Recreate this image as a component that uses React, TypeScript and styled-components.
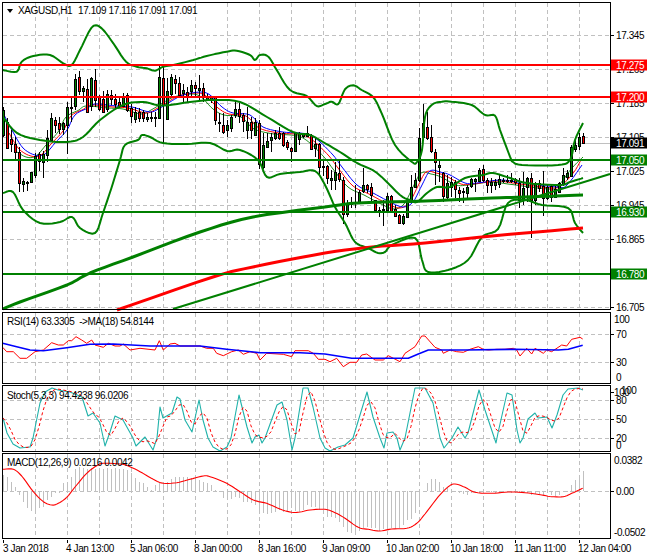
import React from "react";
import styled, { createGlobalStyle } from "styled-components";

const Global = createGlobalStyle`
  html, body { margin: 0; padding: 0; background: #ffffff; }
`;

const Page = styled.main`
  width: 650px;
  height: 560px;
  display: flex;
  flex-direction: column;
  background: #ffffff;
  overflow: hidden;
  font-family: "Liberation Sans", Arial, sans-serif;
`;

const Pane = styled.section<{ $h: number }>`
  flex: none;
  height: ${(p) => p.$h}px;
  width: 650px;
  svg { display: block; }
`;

const Label = styled.text`
  font-family: "Liberation Sans", Arial, sans-serif;
  font-size: 10px;
  letter-spacing: -0.4px;
  white-space: pre;
  fill: #000000;
`;

const BoxLabel = styled(Label)`
  fill: #ffffff;
`;

type P = [number, number];

const zp = (f: number[], xo: number, yo: number): P[] => {
  const out: P[] = [];
  for (let i = 0; i < f.length; i += 2) out.push([xo + f[i] / 3, yo + f[i + 1] / 3]);
  return out;
};
const pl = (pts: P[]) => pts.map(([x, y]) => `${x.toFixed(1)},${y.toFixed(1)}`).join(" ");

const smooth = (pts: P[], steps = 5): P[] => {
  const out: P[] = [pts[0]];
  for (let i = 0; i < pts.length - 1; i++) {
    const p0 = pts[Math.max(0, i - 1)];
    const p1 = pts[i];
    const p2 = pts[i + 1];
    const p3 = pts[Math.min(pts.length - 1, i + 2)];
    for (let s = 1; s <= steps; s++) {
      const t = s / steps;
      const f = (a: number, b: number, c: number, d: number) =>
        0.5 * (2 * b + (c - a) * t + (2 * a - 5 * b + 4 * c - d) * t * t + (3 * b - a - 3 * c + d) * t * t * t);
      out.push([f(p0[0], p1[0], p2[0], p3[0]), f(p0[1], p1[1], p2[1], p3[1])]);
    }
  }
  return out;
};

const UPPER: P[] = smooth([
  ...zp([8,210,50,215,65,185,100,168,150,165,190,190,215,195,240,150,270,90,288,76,310,90,340,130,378,185,410,200,440,205,465,212,490,200,520,195,580,180,620,168,680,155,710,152,750,165,765,180,780,165,805,170,830,210,870,270,920,288,950,318,975,312], 0, 0),
  ...zp([20,305,40,312,60,268,85,256,110,270,145,292,170,340], 325, 0),
  [395,145],[412,162],[417,162],[422,150],[425,117],
  ...zp([320,315,350,305,380,305,440,315,480,345,510,347,525,390,555,470], 325, 0),
  [513,162],[522,165],[558,165],[570,160],[575,140],[583,123],
]);
const MIDDLE: P[] = smooth([
  [3,117],[17,133],[40,140],[67,142],[83,137],[100,120],[123,105],[143,102],[157,105],[170,105],[190,102],[213,100],[240,102],[267,117],[293,132],[310,135],[323,142],[340,152],[357,163],[377,173],[400,195],[410,200],[417,202],[427,193],[437,187],[450,187],[465,178],[483,175],[493,173],[510,178],[527,183],[560,185],[570,182],[583,178],
]);
const LOWER: P[] = smooth([
  [3,193],[13,192],[23,210],[40,223],[60,222],[72,217],[80,228],[95,233],[103,213],[113,183],[120,160],[125,145],[138,140],[142,135],[150,137],[163,143],[187,144],[210,143],[227,151],[240,150],[258,160],[267,177],[280,174],[300,172],[315,171],[325,185],[335,207],[345,223],[355,242],[368,248],[378,253],[385,252],[392,245],[415,238],[422,260],[428,272],[448,270],[468,260],[482,237],[498,229],[508,203],[525,200],[542,205],[568,208],[575,223],[583,233],
]);
const MA200: P[] = smooth([[3,309],[20,302],[67,285],[90,273],[133,257],[200,232],[253,217],[325,207],[358,203],[425,201],[492,198],[525,197],[583,195]]);
const MARED: P[] = smooth([[117,310],[213,277],[253,267],[325,253],[372,247],[425,243],[492,236],[583,228]]);
const BLUE_RAW: P[] = [
  [3,113],[13,132],[23,148],[35,155],[45,154],[55,143],[67,130],[75,115],[88,108],[95,104],[117,106],[132,107],[150,112],[160,108],[170,102],[183,95],[200,92],[210,95],[222,107],[233,113],[250,115],[263,127],[283,132],[300,133],[310,135],[320,142],[333,155],[342,167],[357,185],[373,193],[390,202],[403,207],[413,202],[422,185],[430,171],[440,172],[450,175],[465,183],[477,183],[500,180],[517,182],[557,187],[567,185],[582,165],
];
const BLUE = smooth(BLUE_RAW);
const RED_MA: P[] = smooth([...BLUE_RAW.slice(1, -2).map(([x, y]): P => [x - 4, y + 1]), [563, 184], [574, 172], [581, 160]]);
const GREEN_MA: P[] = smooth([...BLUE_RAW.slice(2, -2).map(([x, y]): P => [x - 9, y + 2]), [558, 186], [572, 168], [583, 157]]);

type C = [number, number, number, number, 0 | 1];
const G = 0 as const;
const R = 1 as const;
const C1: C[] = [
  [125,135,210,215,G],[160,172,250,252,R],[195,222,236,262,R],[215,236,260,282,R],[245,262,355,382,R],[340,348,356,380,G],[348,350,352,378,G],[320,322,352,354,G],[265,272,330,340,G],[262,268,290,318,R],
  [258,268,292,338,G],[195,220,272,290,G],[145,160,225,228,G],[155,165,180,205,R],[155,175,192,208,R],[170,175,192,210,G],[110,125,178,268,G],[95,126,130,170,G],[28,42,122,135,G],[17,36,78,90,R],
  [62,68,78,110,G],[42,72,140,140,R],[35,40,125,138,G],[12,44,104,125,R],[90,95,130,138,R],[78,102,140,145,R],[75,88,132,140,G],[75,90,102,120,R],[88,102,118,130,R],[100,112,124,130,R],
  [85,92,122,125,G],[85,90,136,140,R],[118,130,155,175,R],[125,140,160,175,G],[130,140,158,170,R],[135,140,158,170,R],[145,155,160,170,G],
  [140,155,158,172,G],[140,155,158,185,G],[2,36,158,160,G],[0,38,120,235,R],[40,78,163,165,G],[28,36,88,92,G],[30,42,55,88,R],[35,55,92,98,R],[58,76,84,110,G],
  [65,82,95,112,R],[45,60,78,95,G],[50,60,70,92,R],[30,68,75,105,G],[55,70,95,110,R],[88,95,102,108,G],[92,95,102,115,G],[92,95,165,180,R],[145,172,176,200,G],[145,180,200,208,R],
  [165,180,194,215,G],[150,155,188,200,G],[105,132,150,160,G],[115,132,152,175,R],[145,150,168,200,R],[125,170,195,222,G],[155,172,196,222,R],[158,172,210,212,G],[165,175,298,312,R],[205,240,305,312,G],
  [205,228,246,250,G],[205,215,225,262,G],[195,205,220,225,G],[185,205,220,225,R],[200,205,240,245,R],[225,232,248,255,R],[245,250,260,292,R],[200,205,258,262,G],[200,205,222,240,G],
];
const C2: C[] = [
  [68,70,78,85,G],[48,70,78,82,G],[72,75,118,118,R],[85,103,115,142,G],[100,103,172,195,R],[150,168,172,198,G],[165,168,205,222,R],[180,205,210,240,G],[155,185,210,240,G],[150,188,205,215,R],
  [200,210,312,342,R],[270,280,312,322,G],[260,278,282,295,G],[225,275,278,295,G],[240,245,278,282,G],[175,224,242,250,G],[222,224,235,250,R],[220,232,255,280,R],[270,270,300,305,R],[290,300,304,320,G],
  [270,296,300,348,G],[250,258,300,305,G],[255,258,302,305,R],[285,296,316,320,R],[312,316,340,342,R],[312,318,340,344,G],[270,275,320,325,G],[195,232,272,280,G],[190,210,230,235,G],[55,85,212,215,G],
  [-18,39,80,85,G],[6,51,84,90,R],[45,80,122,128,R],[118,125,155,225,R],[150,165,170,215,G],[185,190,258,275,R],[195,220,262,268,G],
  [200,215,230,262,G],[210,215,235,265,R],[230,240,250,275,R],[235,242,245,278,G],[225,230,248,265,G],[205,208,230,235,G],[205,208,214,245,G],[175,180,212,215,G],[165,178,212,215,R],[205,210,225,250,R],
  [205,215,224,250,G],[208,215,225,240,G],[195,208,222,235,G],[205,210,214,220,R],[195,210,214,220,G],[190,210,214,220,G],[205,208,218,225,R],[205,218,270,295,R],[185,235,272,285,G],[200,205,232,275,G],
  [190,205,270,385,R],[215,220,272,285,G],[210,220,235,245,R],[183,228,265,318,R],[225,232,265,270,G],[225,228,260,275,R],[225,238,262,265,G],[215,218,245,250,G],[175,195,222,228,G],[180,190,202,210,G],
  [105,110,198,200,G],[85,105,118,125,G],[70,82,108,120,G],[70,78,100,100,R],
];
const CANDLES = [
  ...C1.map((c) => c.map((v, i) => (i < 4 ? 65 + v / 3 : v))),
  ...C2.map((c) => c.map((v, i) => (i < 4 ? 110 + v / 3 : v))),
];

const RSI_RED: P[] = [
  ...zp([8,112,20,125,40,125,60,145,80,145,105,125,130,120,155,98,175,105,190,105,205,92,215,92,228,80,245,90,260,100,275,90,285,105,310,112,325,100,345,108,360,108,370,102,390,120,420,115,465,120,478,92,490,120,510,102,525,100,540,108,600,108,620,115,640,115,650,130,670,137,695,125,715,120,730,133,750,125,770,130,780,150,800,130,850,133,875,140,885,122,925,122,940,130,955,148,975,148], 0, 310),
  ...zp([15,155,35,145,55,170,75,157,95,157,110,135,125,132,150,150,175,150,190,137,225,155,240,130,270,110,290,78,300,78,330,112,350,120,355,130,375,120,395,125,415,127,435,118,460,110,475,118,490,120,515,118,530,118,540,118,565,115,575,120,585,138,605,115,620,132,630,115,655,130,665,120,680,125,710,105,725,108,740,88,765,82,773,87], 325, 310),
];
const RSI_BLUE: P[] = [
  ...zp([8,100,50,110,90,120,130,122,200,113,270,103,340,102,450,108,600,108,680,118,780,128,900,128,975,132], 0, 310),
  ...zp([80,145,250,145,280,132,310,120,420,120,570,118,700,120,730,118,773,106], 325, 310),
];

const TEAL: P[] = [
  [3,418],[7,433],[13,444],[20,448],[30,447],[33,438],[40,403],[45,392],[52,388],[58,390],[70,392],[82,397],[88,416],[93,413],[100,423],[105,446],[110,432],[115,416],[123,420],[133,438],[136,446],[145,437],[153,450],[157,438],[160,407],[163,418],[172,413],[177,397],[180,399],[185,420],[192,432],[199,400],[203,420],[208,438],[213,447],[220,451],[227,447],[231,438],[239,395],[247,427],[252,443],[255,437],[259,435],[262,443],[265,438],[277,405],[282,402],[287,420],[292,450],[295,438],[303,388],[308,388],[313,407],[320,438],[325,448],[330,451],[338,447],[345,445],[353,438],[367,392],[373,417],[380,438],[384,448],[387,433],[393,432],[397,438],[400,450],[405,438],[415,388],[425,388],[433,403],[440,438],[444,448],[452,438],[458,427],[465,438],[468,433],[479,390],[485,410],[495,440],[496,443],[498,433],[507,393],[512,395],[517,430],[520,443],[523,438],[528,419],[535,413],[538,418],[547,417],[552,428],[557,415],[563,395],[568,389],[578,388],[583,390],
];
const interp = (pts: P[], x: number) => {
  for (let i = 1; i < pts.length; i++) {
    if (x <= pts[i][0]) {
      const [a, b] = [pts[i - 1], pts[i]];
      return a[1] + ((b[1] - a[1]) * (x - a[0])) / (b[0] - a[0] || 1);
    }
  }
  return pts[pts.length - 1][1];
};
const SIGNAL: P[] = Array.from({ length: 146 }, (_, k): P => {
  const x = 3 + 4 * k;
  const v = [x, x - 4, x - 8].map((q) => interp(TEAL, Math.max(3, q)));
  return [x, Math.max(388, (v[0] + v[1] + v[2]) / 3)];
});

const HIST_A = [105,110,125,140,165,185,205,212,210,205,200,180,170,160,158,130,125,110,88,82,85,88,85,88,85,88,85,88,85,88,88,90,100,115,125,130,140,150,135,130,130,125,118,112,112,110,112,115,115,120,125,130,135,150,155,175,175,178,170,175,185,185,190,195,215,220,222,218,215,210,215,212,205,212,215,210,195,200,200,210,208];
const HIST_B = [230,232,235,245,262,275,280,282,272,265,262,265,265,272,268,268,265,268,265,255,240,238,220,190,155,128,118,118,125,142,145,150,155,158,162,165,160,160,158,158,156,156,158,158,156,156,158,158,155,158,160,165,162,165,165,160,165,168,165,155,155,135,120,105,92];
const HIST = [...HIST_A, ...HIST_B].map((z) => 440 + z / 3);

const MACD_LINE: P[] = smooth([
  ...zp([8,88,40,88,65,108,100,155,130,185,155,195,175,190,200,172,230,135,260,100,290,77,310,70,360,72,385,78,420,95,460,118,490,130,530,128,570,118,610,108,630,110,680,130,720,155,760,180,800,190,840,207,875,217,900,216,930,210,975,208], 0, 440),
  ...zp([30,218,60,235,100,262,130,268,165,273,200,267,245,265,275,250,300,222,340,170,370,140,390,132,420,142,450,157,500,160,550,156,600,158,650,165,680,170,715,170,740,160,773,145], 325, 440),
]);

const VGRID = Array.from({ length: 18 }, (_, i) => 35.5 + 32 * i);

const Grid = ({ ys, top, bottom }: { ys: number[]; top: number; bottom: number }) => (
  <g stroke="#c0c0c0" strokeWidth={1} strokeDasharray="4 3" shapeRendering="crispEdges">
    {VGRID.map((x) => <line key={x} x1={x} x2={x} y1={top} y2={bottom} />)}
    {ys.map((y) => <line key={y} x1={3} x2={610} y1={y} y2={y} />)}
  </g>
);

const Frame = ({ top, bottom }: { top: number; bottom: number }) => (
  <rect x={2.5} y={top + 0.5} width={608} height={bottom - top} fill="none" stroke="#000" strokeWidth={1.4} shapeRendering="crispEdges" />
);

const AxisLabel = ({ y, text, tick = true, x = 616 }: { y: number; text: string; tick?: boolean; x?: number }) => (
  <g>
    {tick && <line x1={611} x2={614} y1={y + 0.5} y2={y + 0.5} stroke="#000" shapeRendering="crispEdges" />}
    <Label x={x} y={y + 4}>{text}</Label>
  </g>
);

const Tag = ({ y, text, color }: { y: number; text: string; color: string }) => (
  <g>
    <rect x={611} y={y - 5.5} width={36} height={11} fill={color} />
    <BoxLabel x={616} y={y + 4}>{text}</BoxLabel>
  </g>
);

const HLine = ({ y, color }: { y: number; color: string }) => (
  <line x1={3} x2={610} y1={y} y2={y} stroke={color} strokeWidth={2} shapeRendering="crispEdges" />
);

const Line = ({ pts, color, w = 1, dash }: { pts: P[]; color: string; w?: number; dash?: string }) => (
  <polyline points={pl(pts)} fill="none" stroke={color} strokeWidth={w} strokeDasharray={dash} strokeLinejoin="round" />
);

const Candles = () => (
  <g shapeRendering="crispEdges">
    {CANDLES.map((c, k) => {
      const x = 3 + 4 * k;
      const [hi, top, bot, lo, col] = c;
      return (
        <g key={k}>
          <line x1={x + 0.5} x2={x + 0.5} y1={Math.round(hi)} y2={Math.round(lo)} stroke="#000" />
          <rect x={x - 0.5} y={Math.round(top) + 0.5} width={2} height={Math.max(1, Math.round(bot - top))} fill={col ? "#ff0000" : "#008000"} stroke="#000" />
        </g>
      );
    })}
  </g>
);

const PaneSvg = ({ y0, h, label, children }: { y0: number; h: number; label: string; children: React.ReactNode }) => (
  <Pane $h={h} aria-label={label}>
    <svg width={650} height={h} viewBox={`0 ${y0} 650 ${h}`}>{children}</svg>
  </Pane>
);

const MAIN_Y = [35.5, 69.5, 103.5, 137.5, 171.5, 205.5, 239.5, 273.5, 307.5];
const PRICES: [number, string][] = [[35,"17.345"],[69,"17.265"],[103,"17.185"],[137,"17.105"],[171,"17.025"],[205,"16.945"],[239,"16.865"],[307,"16.705"]];
const TIMES: [number, string][] = [[3,"3 Jan 2018"],[66,"4 Jan 13:00"],[130,"5 Jan 06:00"],[194,"8 Jan 00:00"],[258,"8 Jan 16:00"],[322,"9 Jan 09:00"],[386,"10 Jan 02:00"],[450,"10 Jan 18:00"],[514,"11 Jan 11:00"],[578,"12 Jan 04:00"]];

export default function App() {
  return (
    <Page>
      <Global />
      <PaneSvg y0={0} h={312} label="Price chart">
        <Grid ys={MAIN_Y} top={3} bottom={311} />
        <line x1={3} x2={610} y1={143.5} y2={143.5} stroke="#c0c0c0" shapeRendering="crispEdges" />
        <Line pts={GREEN_MA} color="#008000" w={0.9} />
        <Line pts={RED_MA} color="#ff0000" />
        <Line pts={BLUE} color="#0000ff" />
        <Candles />
        <Line pts={UPPER} color="#008000" w={2} />
        <Line pts={MIDDLE} color="#008000" w={2} />
        <Line pts={LOWER} color="#008000" w={2} />
        <Line pts={MA200} color="#008000" w={3} />
        <Line pts={MARED} color="#ff0000" w={3} />
        <line x1={173} y1={309} x2={610} y2={174} stroke="#008000" strokeWidth={2} />
        <HLine y={65} color="#ff0000" />
        <HLine y={97} color="#ff0000" />
        <HLine y={160} color="#008000" />
        <HLine y={212} color="#008000" />
        <HLine y={274} color="#008000" />
        <Frame top={2} bottom={309} />
        <polygon points="7,9 13,9 10,13" fill="#000" />
        <Label x={18} y={14}>XAGUSD,H1</Label>
        <Label x={78} y={14}>17.109 17.116 17.091 17.091</Label>
        {PRICES.map(([y, t]) => <AxisLabel key={t} y={y} text={t} />)}
        <Tag y={65} text="17.275" color="#ff0000" />
        <Tag y={97} text="17.200" color="#ff0000" />
        <Tag y={143} text="17.091" color="#000000" />
        <Tag y={160} text="17.050" color="#008000" />
        <Tag y={212} text="16.930" color="#008000" />
        <Tag y={274} text="16.780" color="#008000" />
      </PaneSvg>

      <PaneSvg y0={312} h={73} label="RSI">
        <Grid ys={[334.5, 362.5]} top={313} bottom={384} />
        <Line pts={RSI_RED} color="#ff0000" />
        <Line pts={RSI_BLUE} color="#0000ff" w={1.6} />
        <Frame top={312} bottom={72 + 312 - 1} />
        <Label x={7} y={325}>{"RSI(14) 63.3305  ->MA(18) 54.8144"}</Label>
        <AxisLabel y={319} text="100" x={614} tick={false} />
        <AxisLabel y={334} text="70" />
        <AxisLabel y={362} text="30" />
        <AxisLabel y={377} text="0" tick={false} />
      </PaneSvg>

      <PaneSvg y0={385} h={68} label="Stochastic">
        <Grid ys={[400.5, 419.5, 438.5]} top={386} bottom={452} />
        <Line pts={TEAL} color="#20b2aa" w={1.1} />
        <Line pts={SIGNAL} color="#ff0000" w={1} dash="3 2.5" />
        <Frame top={385} bottom={451} />
        <Label x={7} y={399}>Stoch(5,3,3) 94.4238 96.0206</Label>
        <AxisLabel y={392} text="100" x={614} />
        <AxisLabel y={390} text="100" x={621} tick={false} />
        <AxisLabel y={400} text="80" />
        <AxisLabel y={419} text="50" />
        <AxisLabel y={438} text="20" />
        <AxisLabel y={445} text="0" tick={false} />
      </PaneSvg>

      <PaneSvg y0={453} h={87} label="MACD">
        <Grid ys={[491.5]} top={454} bottom={538} />
        <g stroke="#c0c0c0" shapeRendering="crispEdges">
          {HIST.map((y, k) => <line key={k} x1={3.5 + 4 * k} x2={3.5 + 4 * k} y1={491} y2={y} />)}
        </g>
        <Line pts={MACD_LINE} color="#ff0000" w={1.1} />
        <Frame top={453} bottom={538} />
        <Label x={7} y={466}>MACD(12,26,9) 0.0216 0.0042</Label>
        <AxisLabel y={460} text="0.0382" tick={false} x={614} />
        <AxisLabel y={491} text="0.00" />
        <AxisLabel y={532} text="-0.0502" tick={false} x={614} />
      </PaneSvg>

      <PaneSvg y0={540} h={20} label="Time axis">
        <g stroke="#000" shapeRendering="crispEdges">
          {TIMES.map(([x], i) => <line key={i} x1={3.5 + 64 * i} x2={3.5 + 64 * i} y1={540} y2={543} />)}
        </g>
        {TIMES.map(([x, t]) => <Label key={t} x={x} y={552}>{t}</Label>)}
      </PaneSvg>
    </Page>
  );
}
